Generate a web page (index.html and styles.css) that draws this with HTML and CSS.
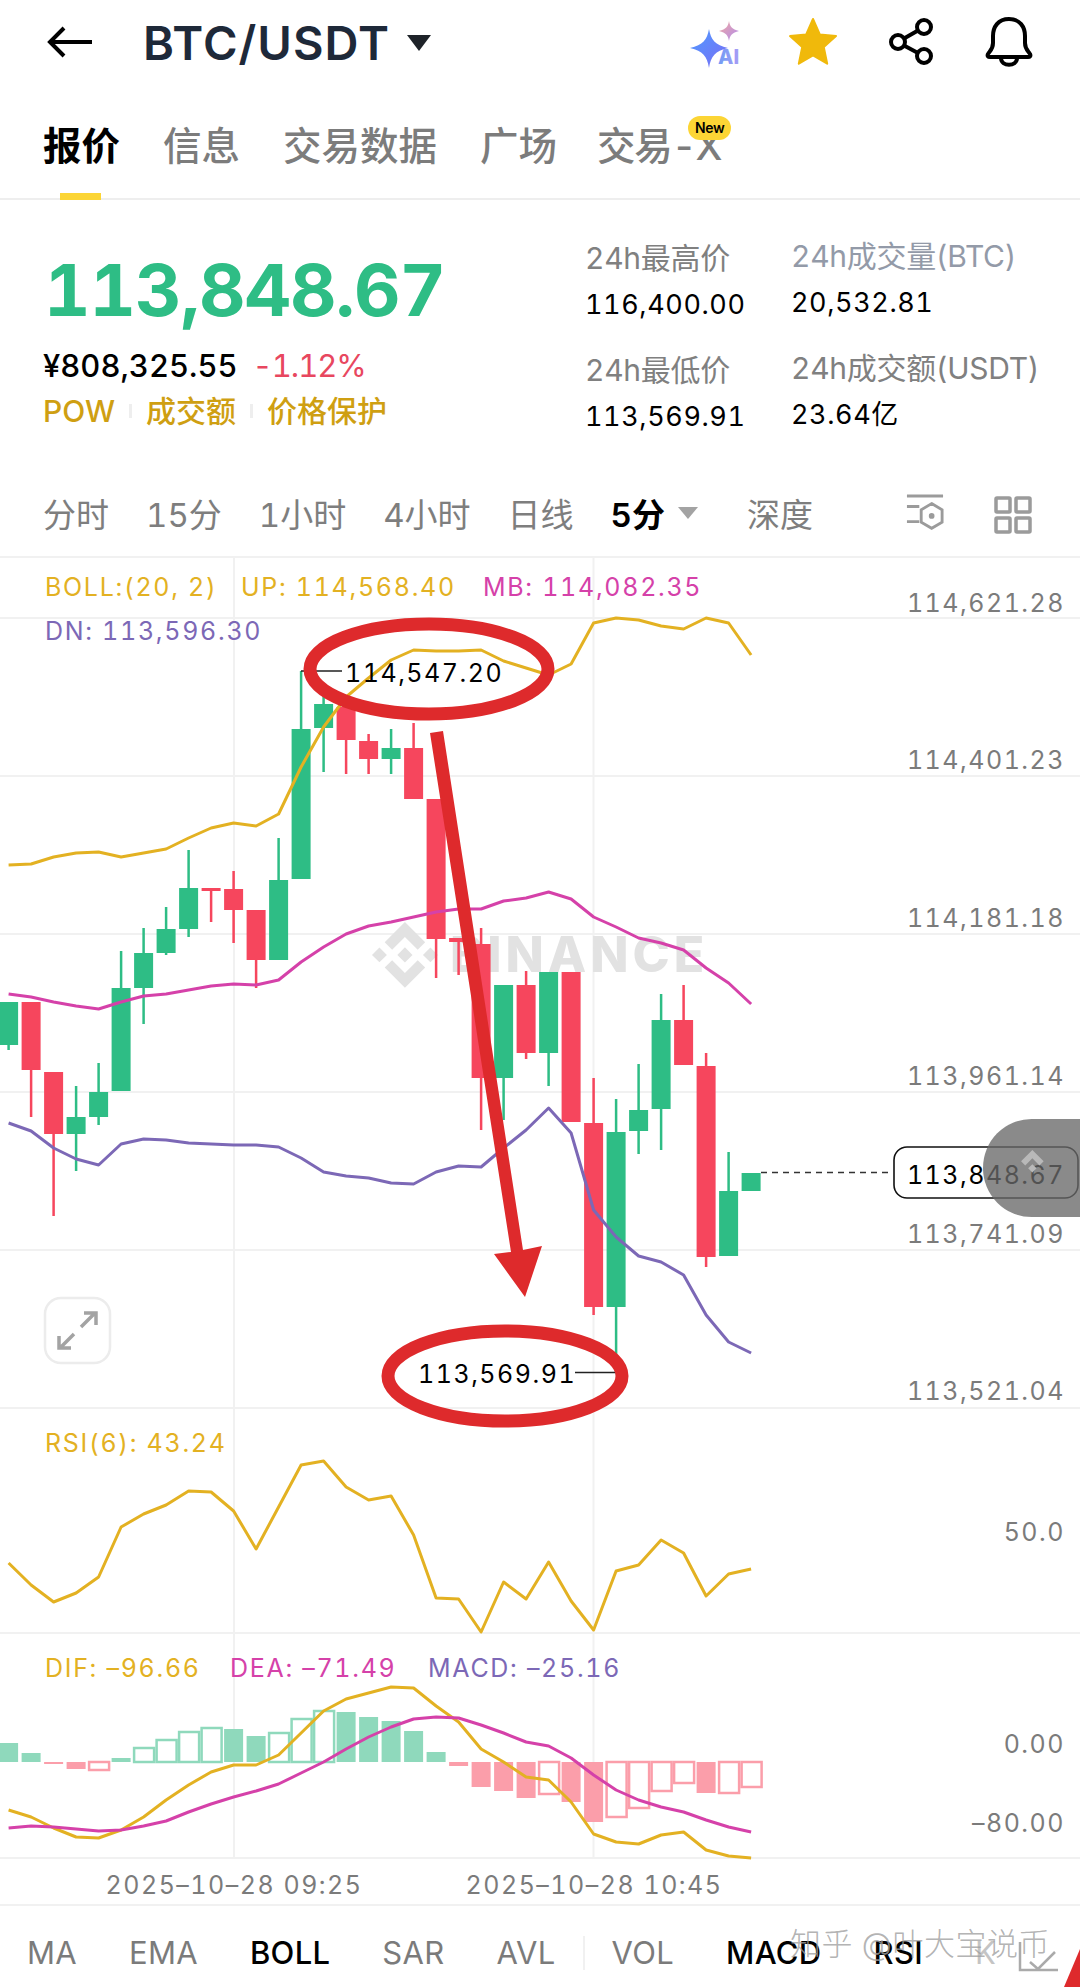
FILE: index.html
```html
<!DOCTYPE html>
<html lang="zh">
<head>
    <meta charset="UTF-8">
    <meta name="viewport" content="width=device-width, initial-scale=1.0">
    <title>BTC/USDT</title>
    <link rel="stylesheet" href="styles.css">
</head>
<body>
    <header class="topbar">
        <svg class="back" width="46" height="32" viewBox="0 0 46 32"><path d="M45 16H3M17 2 3 16l14 14" fill="none" stroke="#000" stroke-width="4"/></svg>
        <h1 class="pair">BTC/USDT</h1>
        <span class="pair-caret"></span>
        <div class="top-icons">
            <svg width="56" height="56" viewBox="0 0 56 56">
                <defs>
                    <linearGradient id="ai-a" x1="0" y1="0" x2="1" y2="1"><stop offset="0" stop-color="#4f9cff"/><stop offset="1" stop-color="#7a6cf5"/></linearGradient>
                    <linearGradient id="ai-b" x1="0" y1="0" x2="1" y2="1"><stop offset="0" stop-color="#f0a8a0"/><stop offset="1" stop-color="#b08cf0"/></linearGradient>
                    <linearGradient id="ai-c" x1="0" y1="0" x2="1" y2="0"><stop offset="0" stop-color="#6f9cf5"/><stop offset="1" stop-color="#a79cf5"/></linearGradient>
                </defs>
                <path d="M19 16c2 11 6 16 19 19-13 3-17 8-19 20-2-12-6-17-19-20 13-3 17-8 19-19z" fill="url(#ai-a)" transform="translate(0 -1)"/>
                <path d="M39 8c1 6 3 8 10 10-7 2-9 4-10 10-1-6-3-8-10-10 7-2 9-4 10-10z" fill="url(#ai-b)" transform="translate(0 -1)"/>
                <text class="ai-text" x="28" y="50" fill="url(#ai-c)">AI</text>
            </svg>
            <svg class="star" width="50" height="50" viewBox="0 0 50 50"><path d="M25 2l6.8 15.4 16.2 1.7-12.2 11 3.4 16.6L25 38.3l-14.2 8.4 3.4-16.6L2 19.1l16.2-1.7z" fill="#F0B90B" stroke="#F0B90B" stroke-width="2" stroke-linejoin="round"/></svg>
            <svg width="50" height="50" viewBox="0 0 50 50" fill="none" stroke="#000" stroke-width="4"><circle cx="36" cy="10" r="7"/><circle cx="10" cy="25" r="7"/><circle cx="36" cy="39" r="7"/><path d="M16 21.5 30 13.5M16 28.5 30 36"/></svg>
            <svg width="50" height="52" viewBox="0 0 50 52" fill="none" stroke="#000" stroke-width="4" stroke-linejoin="round"><path d="M25 3C14 3 9 11 9 20v7c0 6-3 8-5 11-1 2 0 3 2 3h38c2 0 3-1 2-3-2-3-5-5-5-11v-7c0-9-5-17-16-17z"/><path d="M17 42c0 9 16 9 16 0"/></svg>
        </div>
    </header>

    <nav class="tabs">
        <span class="tab active">报价</span>
        <span class="tab">信息</span>
        <span class="tab">交易数据</span>
        <span class="tab">广场</span>
        <span class="tab tab-x">交易-X<em class="badge">New</em></span>
    </nav>

    <section class="quote">
        <div class="quote-main">
            <div class="last-price">113,848.67</div>
            <div class="sub-price"><span>¥808,325.55</span><span class="change">-1.12%</span></div>
            <div class="tags"><span>POW</span><i></i><span>成交额</span><i></i><span>价格保护</span></div>
        </div>
        <div class="stats">
            <div class="stat"><label>24h最高价</label><b>116,400.00</b></div>
            <div class="stat raised"><label class="cool">24h成交量(BTC)</label><b>20,532.81</b></div>
            <div class="stat"><label>24h最低价</label><b>113,569.91</b></div>
            <div class="stat raised"><label>24h成交额(USDT)</label><b>23.64亿</b></div>
        </div>
    </section>

    <nav class="periods">
        <span>分时</span>
        <span>15分</span>
        <span>1小时</span>
        <span>4小时</span>
        <span>日线</span>
        <span class="current">5分</span>
        <i class="period-caret"></i>
        <span class="depth">深度</span>
        <svg class="tool" width="38" height="44" viewBox="0 0 40 46" fill="none" stroke="#9b9b9b" stroke-width="3"><path d="M1 3h38M1 14h13M1 30h13"/><path d="M27 11l11 6.5v13L27 37l-11-6.5v-13z"/><circle cx="27" cy="24" r="3" fill="#9b9b9b" stroke="none"/></svg>
        <svg class="tool" width="38" height="38" viewBox="0 0 38 38" fill="none" stroke="#9b9b9b" stroke-width="3.5"><rect x="2" y="2" width="14" height="14" rx="1"/><rect x="22" y="2" width="14" height="14" rx="1"/><rect x="2" y="22" width="14" height="14" rx="1"/><rect x="22" y="22" width="14" height="14" rx="1"/></svg>
    </nav>

    <svg class="chart" width="1080" height="1346" viewBox="0 558 1080 1346">
        <!-- grid -->
        <path class="grid" d="M0 618H1080M0 776H1080M0 934H1080M0 1092H1080M0 1250H1080M0 1408H1080M0 1633H1080M0 1858H1080M234 558V1858M593.5 558V1858"/>

        <!-- chart watermark -->
        <g fill="#e2e2e2">
            <path transform="translate(372 922) scale(.52)" d="M38.73 53.2l24.59-24.58 24.6 24.6 14.3-14.31L63.32 0 24.43 38.9zM0 63.31l14.3-14.31 14.31 14.31-14.31 14.3zM38.73 73.41l24.59 24.59 24.6-24.6 14.31 14.29-38.9 38.91-38.91-38.88zM98 63.31l14.3-14.31 14.31 14.3-14.31 14.32zM77.83 63.3L63.32 48.78 52.59 59.51l-1.24 1.23-2.54 2.54 14.51 14.5 14.51-14.51z"/>
            <text class="mark" x="450" y="972">BINANCE</text>
        </g>

        <g id="bars"></g>
        <g id="candles"></g>
        <g id="lines"></g>

        <!-- legends -->
        <text class="legend yellow" x="45" y="596">BOLL:(20, 2)</text>
        <text class="legend yellow" x="241" y="596">UP: 114,568.40</text>
        <text class="legend pink" x="483" y="596">MB: 114,082.35</text>
        <text class="legend purple" x="45" y="640">DN: 113,596.30</text>
        <text class="legend yellow" x="45" y="1452">RSI(6): 43.24</text>
        <text class="legend yellow" x="45" y="1677">DIF: –96.66</text>
        <text class="legend pink" x="230" y="1677">DEA: –71.49</text>
        <text class="legend purple" x="428" y="1677">MACD: –25.16</text>

        <!-- price axis -->
        <text class="axis" x="1065" y="612">114,621.28</text>
        <text class="axis" x="1065" y="769">114,401.23</text>
        <text class="axis" x="1065" y="927">114,181.18</text>
        <text class="axis" x="1065" y="1085">113,961.14</text>
        <text class="axis" x="1065" y="1243">113,741.09</text>
        <text class="axis" x="1065" y="1400">113,521.04</text>
        <text class="axis" x="1065" y="1541">50.0</text>
        <text class="axis" x="1065" y="1753">0.00</text>
        <text class="axis" x="1065" y="1832">–80.00</text>
        <text class="axis mid" x="234" y="1894">2025–10–28 09:25</text>
        <text class="axis mid" x="594" y="1894">2025–10–28 10:45</text>

        <!-- last price -->
        <path d="M761 1172.5H892" stroke="#333" stroke-width="1.5" stroke-dasharray="6 5"/>
        <rect x="894" y="1147" width="184" height="51" rx="13" fill="#fff" stroke="#111" stroke-width="1.6"/>
        <text class="axis dark" x="1065" y="1184">113,848.67</text>

        <!-- high and low marks -->
        <path d="M301 671H342M575 1372.5H616" stroke="#222" stroke-width="1.5"/>
        <text class="axis dark start" x="345" y="682">114,547.20</text>
        <text class="axis dark start" x="418" y="1383">113,569.91</text>

        <!-- hand drawn notes -->
        <g fill="none" stroke="#DE2A2C" stroke-width="13">
            <ellipse cx="429" cy="669" rx="119" ry="45"/>
            <ellipse cx="505" cy="1376" rx="117" ry="45"/>
        </g>
        <path fill="#DE2A2C" d="M430 733 443 731 523 1250 542 1246 525 1297 494 1254 511 1252z"/>

        <!-- expand -->
        <rect x="45" y="1298" width="65" height="65" rx="16" fill="#fff" stroke="#ececec" stroke-width="2.5"/>
        <path d="M81 1327 95 1313M84 1313H96V1325M74 1334 60 1348M59 1336V1348H71" fill="none" stroke="#a3a3a3" stroke-width="3.5"/>

        <!-- floating ball -->
        <path class="ball" d="M1080 1119h-48.500a48.500 49 0 0 0 0 98H1080z"/>
        <g fill="#b9b9b9" transform="translate(1014 1150) scale(.29)">
            <path d="M38.73 53.2l24.59-24.58 24.6 24.6 14.3-14.31L63.32 0 24.43 38.9zM77.83 63.3L63.32 48.78 48.81 63.28l14.51 14.5z"/>
        </g>
    </svg>

    <footer class="indicators">
        <span>MA</span>
        <span>EMA</span>
        <span class="on">BOLL</span>
        <span>SAR</span>
        <span>AVL</span>
        <i class="sep"></i>
        <span>VOL</span>
        <span class="on">MACD</span>
        <span class="on">RSI</span>
        <span class="faint">K</span>
        <svg class="trend" width="40" height="30" viewBox="0 0 40 30" fill="none" stroke="#aaa" stroke-width="2.500"><path d="M2 0V28H40M12 20 20 27 37 10"/></svg>
        <div class="credit">知乎 @叶大宝说币</div>
        <svg class="corner" width="16" height="38" viewBox="0 0 16 38"><path d="M0 38 16 0V38z" fill="#DE2A2C"/></svg>
    </footer>

    <script src="chart.js"></script>
</body>
</html>
```

FILE: styles.css
```css
* {
    box-sizing: border-box;
}
body {
    margin: 0;
    width: 1080px;
    height: 1987px;
    overflow: hidden;
    background: #fff;
    color: #000;
    font-family: Inter, "Noto Sans CJK SC", sans-serif;
    font-variant-numeric: tabular-nums;
}
.topbar {
    display: flex;
    align-items: center;
    height: 84px;
    padding-left: 47px;
}
.pair {
    margin: 0 0 0 50px;
    font-size: 47px;
    font-weight: 600;
    color: #1e2939;
    letter-spacing: 1px;
}
.pair-caret {
    margin: 2px 0 0 17px;
    border-left: 12px solid transparent;
    border-right: 12px solid transparent;
    border-top: 16px solid #1e2329;
}
.top-icons {
    display: flex;
    align-items: center;
    gap: 46px;
    margin-left: auto;
    padding-right: 46px;
}
.star {
    margin: 0 4px 0 -4px;
}
.ai-text {
    font-size: 20px;
    font-weight: 800;
}
.tabs {
    display: flex;
    gap: 43px;
    height: 116px;
    padding: 39px 0 0 43px;
    border-bottom: 2px solid #eeeeee;
    font-size: 38.500px;
    line-height: 46px;
    color: #7c7c7c;
}
.tab {
    position: relative;
    height: 77px;
    font-weight: 500;
}
.tab.active {
    color: #000;
    font-weight: 700;
}
.tab.active::after {
    content: "";
    position: absolute;
    left: 17px;
    bottom: 0;
    width: 41px;
    height: 7px;
    background: #fcd535;
}
.tab-x {
    margin-left: -3px;
    letter-spacing: -1.2px;
}
.badge {
    position: absolute;
    top: -7px;
    right: -10px;
    width: 43px;
    height: 24px;
    border-radius: 12px;
    background: #fcd535;
    color: #000;
    font-size: 14px;
    font-style: normal;
    font-weight: 600;
    line-height: 24px;
    text-align: center;
    letter-spacing: -0.3px;
}
.quote {
    display: flex;
    height: 270px;
    padding: 0 0 0 43px;
}
.quote-main {
    width: 542px;
}
.last-price {
    margin: 46px 0 0 1px;
    font-size: 72px;
    font-weight: 700;
    line-height: 88px;
    letter-spacing: -1px;
    color: #2ebd85;
}
.sub-price {
    display: flex;
    gap: 15px;
    margin-top: 14px;
    font-size: 31px;
    font-weight: 500;
    line-height: 36px;
}
.change {
    color: #e8475f;
    font-weight: 400;
    letter-spacing: -1px;
}
.tags {
    display: flex;
    align-items: center;
    margin-top: 8px;
    font-size: 30px;
    font-weight: 500;
    line-height: 38px;
    color: #cf9f12;
}
.tags i {
    width: 3px;
    height: 14px;
    margin: 0 14px;
    background: #eeeeee;
}
.stats {
    display: grid;
    grid-template-columns: 206px 1fr;
    row-gap: 25px;
    align-content: start;
    padding-top: 38px;
}
.stat {
    display: flex;
    flex-direction: column;
    gap: 7px;
}
.stat.raised {
    margin-top: -2px;
}
.stat label {
    font-size: 30px;
    line-height: 40px;
    letter-spacing: -0.3px;
    color: #808080;
}
.stat label.cool {
    color: #939aa8;
}
.stat b {
    font-size: 27px;
    font-weight: 400;
    line-height: 40px;
    letter-spacing: 0.6px;
}
.periods {
    display: flex;
    align-items: center;
    height: 88px;
    padding: 0 48px 0 43px;
    border-bottom: 2px solid #f1f1f1;
    font-size: 33px;
    color: #7e7e7e;
}
.periods span {
    margin-right: 37px;
}
.periods .current {
    margin-right: 13px;
    color: #000;
    font-weight: 600;
}
.period-caret {
    border-left: 10px solid transparent;
    border-right: 10px solid transparent;
    border-top: 12px solid #a3a3a3;
}
.periods .depth {
    margin-left: 49px;
    margin-right: auto;
}
.tool {
    margin: 4px 0 0 50px;
}
.chart {
    display: block;
}
.grid {
    fill: none;
    stroke: #f1f1f1;
    stroke-width: 2;
}
.mark {
    font-size: 50px;
    font-weight: 800;
    letter-spacing: 4px;
}
.legend {
    font-size: 25px;
    letter-spacing: 1.7px;
}
.yellow { fill: #e3b122; }
.pink { fill: #d541a9; }
.purple { fill: #7c68b6; }
.axis {
    font-size: 25px;
    letter-spacing: 1.500px;
    fill: #7b7b7b;
    text-anchor: end;
}
.axis.mid {
    text-anchor: middle;
}
.axis.dark {
    fill: #000;
}
.axis.start {
    text-anchor: start;
}
.ball {
    fill: rgba(105, 105, 105, 0.78);
}
.indicators {
    position: relative;
    display: flex;
    align-items: center;
    gap: 52px;
    height: 83px;
    padding: 12px 0 0 27px;
    border-top: 2px solid #f1f1f1;
    font-size: 31px;
    letter-spacing: 0.3px;
    color: #7b7b7b;
}
.indicators .on {
    color: #000;
    font-weight: 500;
}
.indicators .faint {
    color: #c4c4c4;
}
.sep {
    width: 2px;
    height: 34px;
    margin: 0 -25px;
    background: #f1f1f1;
}
.credit {
    position: absolute;
    left: 790px;
    top: 18px;
    font-size: 31px;
    font-weight: 300;
    line-height: 40px;
    color: rgba(160, 160, 160, 0.8);
    letter-spacing: 0.5px;
    white-space: nowrap;
}
.trend {
    position: absolute;
    left: 1018px;
    top: 36px;
}
.corner {
    position: absolute;
    right: 0;
    bottom: 0;
}
```

FILE: chart.js
```js
// candle columns are 22.5px apart, y values are page pixels
const colX = i => 8.6 + 22.5 * i;
const GREEN = '#2EBD85';
const RED = '#F6465D';
const NS = 'http://www.w3.org/2000/svg';

function add(parent, tag, attrs) {
    const el = document.createElementNS(NS, tag);
    for (const k in attrs) el.setAttribute(k, attrs[k]);
    parent.appendChild(el);
}

// color, body top, body bottom, wick top, wick bottom
const candles = [
    ['g', 1002, 1045, 1002, 1050], ['r', 1002, 1070, 1002, 1117], ['r', 1072, 1134, 1072, 1216],
    ['g', 1117, 1134, 1086, 1171], ['g', 1092, 1117, 1063, 1125], ['g', 988, 1091, 951, 1091],
    ['g', 953, 988, 928, 1024], ['g', 929, 953, 907, 955], ['g', 888, 929, 850, 937],
    ['r', 888, 891, 888, 922], ['r', 889, 910, 871, 943], ['r', 910, 960, 910, 988],
    ['g', 880, 960, 838, 960], ['g', 729, 879, 671, 879], ['g', 704, 728, 690, 772],
    ['r', 707, 740, 700, 774], ['r', 741, 759, 734, 774], ['g', 748, 759, 729, 774],
    ['r', 748, 799, 723, 799], ['r', 799, 939, 799, 978], ['r', 938, 942, 938, 975],
    ['r', 944, 1078, 928, 1130], ['g', 985, 1078, 985, 1120], ['r', 985, 1053, 971, 1059],
    ['g', 972, 1053, 972, 1086], ['r', 972, 1122, 972, 1122], ['r', 1123, 1307, 1078, 1315],
    ['g', 1132, 1307, 1099, 1373], ['g', 1110, 1131, 1064, 1154], ['g', 1020, 1109, 994, 1150],
    ['r', 1020, 1065, 985, 1065], ['r', 1066, 1257, 1053, 1267], ['g', 1191, 1256, 1152, 1256],
    ['g', 1173, 1191, 1173, 1191]
];
const candleGroup = document.getElementById('candles');
candles.forEach((c, i) => {
    const fill = c[0] === 'g' ? GREEN : RED;
    const x = colX(i);
    add(candleGroup, 'rect', { x: x - 1.25, y: c[3], width: 2.5, height: c[4] - c[3], fill });
    add(candleGroup, 'rect', { x: x - 9.5, y: c[1], width: 19, height: c[2] - c[1], fill });
});

// macd histogram: far end of each bar, then 1 = filled, 0 = hollow
const ZERO = 1762;
const hist = [
    [1743, 1], [1753, 1], [1764, 1], [1769, 1], [1770, 0], [1758, 1], [1748, 0], [1740, 0], [1732, 0], [1728, 0],
    [1729, 1], [1736, 1], [1733, 0], [1719, 0], [1711, 0], [1712, 1], [1717, 1], [1721, 1], [1731, 1], [1752, 1],
    [1766, 1], [1787, 1], [1791, 1], [1798, 1], [1794, 0], [1802, 1], [1822, 1], [1817, 0], [1808, 0], [1791, 0],
    [1783, 0], [1793, 1], [1793, 0], [1787, 0]
];
const barGroup = document.getElementById('bars');
hist.forEach((b, i) => {
    const color = b[0] < ZERO ? '#8fd9bc' : '#fb9eaa';
    const top = Math.min(b[0], ZERO);
    const h = Math.abs(b[0] - ZERO);
    const x = colX(i);
    if (b[1]) add(barGroup, 'rect', { x: x - 9.5, y: top, width: 19, height: h, fill: color });
    else add(barGroup, 'rect', { x: x - 9.5, y: top, width: 20, height: h, fill: 'none', stroke: color, 'stroke-width': 2.5 });
});

const series = [
    // boll up
    ['#E3B122', [865, 864, 857, 853, 852, 857, 853, 849, 838, 828, 823, 826, 814, 767, 727, 697, 678, 660, 650, 651,
        651, 650, 661, 668, 675, 664, 623, 618, 620, 626, 629, 618, 623, 655]],
    // boll mid
    ['#D541A9', [994, 997, 1002, 1006, 1009, 1002, 996, 994, 990, 986, 984, 985, 980, 962, 947, 934, 926, 922, 917, 912,
        909, 909, 901, 898, 892, 899, 917, 927, 938, 943, 950, 968, 983, 1004]],
    // boll down
    ['#7C68B6', [1123, 1131, 1148, 1159, 1165, 1144, 1139, 1140, 1143, 1144, 1145, 1145, 1147, 1158, 1172, 1176, 1178, 1183, 1184, 1172,
        1166, 1167, 1148, 1130, 1108, 1133, 1210, 1237, 1256, 1262, 1275, 1315, 1342, 1353]],
    // rsi
    ['#E3B122', [1563, 1585, 1602, 1593, 1577, 1527, 1514, 1505, 1491, 1492, 1511, 1549, 1507, 1465, 1461, 1487, 1500, 1496, 1535, 1598,
        1599, 1632, 1582, 1599, 1562, 1601, 1630, 1571, 1565, 1540, 1553, 1596, 1574, 1569]],
    // dif
    ['#E3B122', [1810, 1817, 1828, 1837, 1838, 1830, 1817, 1800, 1785, 1772, 1765, 1765, 1755, 1733, 1711, 1699, 1693, 1687, 1688, 1706,
        1722, 1749, 1762, 1777, 1780, 1802, 1834, 1842, 1844, 1835, 1832, 1850, 1856, 1858]],
    // dea
    ['#D541A9', [1828, 1826, 1827, 1829, 1831, 1830, 1826, 1821, 1812, 1804, 1797, 1791, 1784, 1773, 1762, 1749, 1737, 1727, 1719, 1717,
        1718, 1725, 1733, 1742, 1746, 1758, 1775, 1790, 1800, 1807, 1812, 1820, 1827, 1832]]
];
const lineGroup = document.getElementById('lines');
series.forEach(([stroke, ys]) => {
    const points = ys.map((y, i) => colX(i) + ',' + y).join(' ');
    add(lineGroup, 'polyline', { points, fill: 'none', stroke, 'stroke-width': 3, 'stroke-linejoin': 'round' });
});
```
